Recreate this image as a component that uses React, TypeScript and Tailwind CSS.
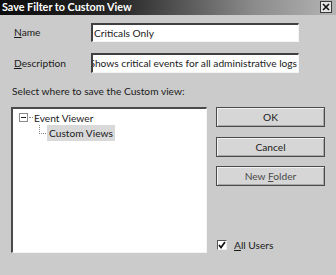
import React from "react";

const F = { fontFamily: 'Lato, "Noto Sans", sans-serif' };

function Btn({ children, dim }: { children: React.ReactNode; dim?: boolean }) {
  return (
    <div className="h-[20px] w-[109px] flex items-center justify-center border border-[#4a4a4a] bg-[#d6d6d6] shadow-[inset_1px_1px_0_#f2f2f2,inset_-1px_-1px_0_#a8a8a8]">
      <span className={dim ? "text-[#4a4a4a]" : "text-[#1a1a1a]"}>{children}</span>
    </div>
  );
}

export default function App() {
  return (
    <div style={F} className="w-[336px] h-[275px] bg-[#cbcbcb] text-[10.2px] leading-none text-[#1a1a1a] overflow-hidden flex flex-col">
      <div className="h-[15px] flex items-center justify-between pl-[2px] pr-[4px] bg-[linear-gradient(90deg,#0c0c0c_0%,#262626_35%,#8a8a8a_75%,#b4b4b4_100%)]">
        <span className="text-white font-bold text-[10.8px]">Save Filter to Custom View</span>
        <div className="w-[12px] h-[12px] mt-[-2px] border border-[#3a3a3a] bg-[#e4e4e4] flex items-center justify-center">
          <svg width="8" height="8" viewBox="0 0 8 8">
            <path d="M1 1 L7 7 M7 1 L1 7" stroke="#111" strokeWidth="1.6" />
          </svg>
        </div>
      </div>
      <div className="flex items-center mt-[8px] h-[19px]">
        <span className="ml-[14px] w-[77px]"><u>N</u>ame</span>
        <div className="w-[208px] h-[19px] bg-white border-t-2 border-l-2 border-[#404040] border-b border-r border-b-[#f4f4f4] border-r-[#f4f4f4] flex items-center pl-[1px]">
          Criticals Only
        </div>
      </div>
      <div className="flex items-center mt-[11px] h-[20px]">
        <span className="ml-[14px] w-[77px]"><u>D</u>escription</span>
        <div className="w-[208px] h-[20px] bg-white border-t-2 border-l-2 border-[#404040] border-b border-r border-b-[#f4f4f4] border-r-[#f4f4f4] flex items-center justify-end overflow-hidden whitespace-nowrap pr-[1px]">
          <span className="shrink-0">Shows critical events for all administrative logs</span>
        </div>
      </div>
      <div className="ml-[12px] mt-[13px]">Select where to save the Custom view:</div>
      <div className="flex mt-[11px]">
        <div className="ml-[11px] w-[196px] h-[146px] bg-white border-t-2 border-l-2 border-[#4a4a4a] border-b border-r border-b-[#f4f4f4] border-r-[#f4f4f4] pt-[1px] pl-[6px]">
          <div className="flex items-center h-[15px]">
            <div className="w-[9px] h-[9px] border border-[#8a8a8a] flex items-center justify-center">
              <div className="w-[5px] h-px bg-[#222]" />
            </div>
            <div className="w-[4px] border-t border-dotted border-[#888] ml-px" />
            <span className="ml-[1px]">Event Viewer</span>
          </div>
          <div className="flex h-[16px]">
            <div className="ml-[20px] w-[7px] h-[9px] border-l border-b border-dotted border-[#888]" />
            <div className="ml-[1px] px-[2px] bg-[#d9d9d9] flex items-center h-[16px]">Custom Views</div>
          </div>
        </div>
        <div className="ml-[9px] flex flex-col">
          <Btn>OK</Btn>
          <div className="mt-[10px]"><Btn>Cancel</Btn></div>
          <div className="mt-[9px]"><Btn dim>New <u>F</u>older</Btn></div>
          <div className="flex items-center mt-[54px] ml-[1px]">
            <div className="w-[10px] h-[10px] bg-white border-t border-l border-[#555] border-b border-r border-b-[#eee] border-r-[#eee] flex items-center justify-center">
              <svg width="8" height="8" viewBox="0 0 8 8">
                <path d="M1 4 L3 6.5 L7 1" stroke="#111" strokeWidth="1.7" fill="none" />
              </svg>
            </div>
            <span className="ml-[7px]"><u>A</u>ll Users</span>
          </div>
        </div>
      </div>
    </div>
  );
}
